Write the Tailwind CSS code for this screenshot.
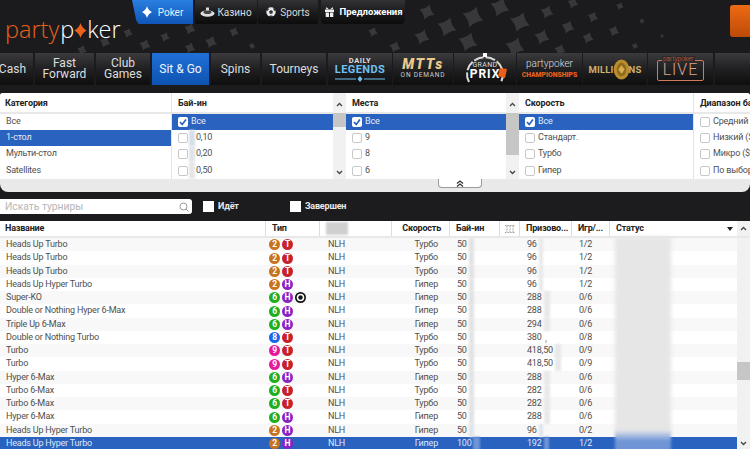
<!DOCTYPE html>
<html lang="ru">
<head>
<meta charset="utf-8">
<script src="https://cdn.jsdelivr.net/npm/@tailwindcss/browser@4"></script>
</head>
<body class="w-[750px] h-[449px] overflow-hidden bg-[#1c1c1e] font-['Roboto',sans-serif] text-[9px] tracking-[-0.2px] text-[#4f4f4f]">
<div class="relative w-[750px] h-[449px] overflow-hidden flex flex-col">

<!-- header -->
<header class="relative h-[93px] shrink-0 bg-[#1b1b1d] overflow-hidden tracking-normal">
  <svg class="absolute left-0 top-0" width="750" height="53" viewBox="0 0 750 53" fill="#38383a">
    <defs><path id="dm" d="M0-10Q3-3 10 0Q3 3 0 10Q-3 3-10 0Q-3-3 0-10z"/></defs>
    <use href="#dm" transform="translate(82 50) rotate(20) scale(.5)"/>
    <use href="#dm" transform="translate(105 42) rotate(20) scale(.55)"/>
    <use href="#dm" transform="translate(128 33) rotate(20) scale(.5)"/>
    <use href="#dm" transform="translate(145 45) rotate(20) scale(.6)"/>
    <use href="#dm" transform="translate(165 37) rotate(20) scale(.5)"/>
    <use href="#dm" transform="translate(190 29) rotate(20) scale(.6)"/>
    <use href="#dm" transform="translate(190 48) rotate(20) scale(.55)"/>
    <use href="#dm" transform="translate(211 42) rotate(20) scale(.65)"/>
    <use href="#dm" transform="translate(234 32) rotate(20) scale(.5)"/>
    <use href="#dm" transform="translate(252 46) rotate(20) scale(.35)"/>
    <use href="#dm" transform="translate(373 32) rotate(20) scale(.5)"/>
    <use href="#dm" transform="translate(395 47) rotate(20) scale(.6)"/>
    <use href="#dm" transform="translate(422 37) rotate(20) scale(.8)"/>
    <use href="#dm" transform="translate(427 12) rotate(20) scale(.8)"/>
    <use href="#dm" transform="translate(447 27) rotate(20) scale(1)"/>
    <use href="#dm" transform="translate(468 42) rotate(20) scale(1)"/>
    <use href="#dm" transform="translate(473 17) rotate(20) scale(1.100)"/>
    <use href="#dm" transform="translate(500 7) rotate(20) scale(1)"/>
    <use href="#dm" transform="translate(515 47) rotate(20) scale(1)"/>
    <use href="#dm" transform="translate(520 22) rotate(20) scale(1.050)"/>
    <use href="#dm" transform="translate(542 37) rotate(20) scale(.8)"/>
    <use href="#dm" transform="translate(547 12) rotate(20) scale(.7)"/>
    <use href="#dm" transform="translate(560 50) rotate(20) scale(.6)"/>
    <use href="#dm" transform="translate(568 27) rotate(20) scale(.7)"/>
    <use href="#dm" transform="translate(573 3) rotate(20) scale(.6)"/>
    <use href="#dm" transform="translate(588 38) rotate(20) scale(.6)"/>
    <use href="#dm" transform="translate(593 17) rotate(20) scale(.55)"/>
    <use href="#dm" transform="translate(614 31) rotate(20) scale(.55)"/>
    <use href="#dm" transform="translate(620 6) rotate(20) scale(.4)"/>
    <use href="#dm" transform="translate(635 46) rotate(20) scale(.35)"/>
    <use href="#dm" transform="translate(642 21) rotate(20) scale(.3)"/>
    <use href="#dm" transform="translate(662 36) rotate(20) scale(.2)"/>
  </svg>

  <!-- logo -->
  <div class="absolute left-[5px] top-[14px] flex items-center h-[32px] text-[23.500px] leading-none font-['Open_Sans',sans-serif] font-light">
    <span class="text-[#e8601c]">party</span><span class="text-white ml-[1px]">p</span><svg width="13" height="17" viewBox="0 0 13 17"><path d="M6.500 1Q8 6 12.500 8.500Q8 11 6.500 16Q5 11 .5 8.500Q5 6 6.500 1z" fill="#e8601c"/></svg><span class="text-white">ker</span>
  </div>

  <!-- top tabs -->
  <nav class="absolute left-[132px] top-0 flex h-[24px] text-[10px]">
    <div class="w-[61px] h-[24px] flex items-center justify-center gap-[6px] bg-gradient-to-b from-[#2a7fe0] to-[#0f56b8] text-[#e6eefb] [clip-path:polygon(0_0,100%_0,100%_100%,11%_100%,7%_85%)]">
      <svg width="10" height="12" viewBox="0 0 10 12"><path d="M5 0Q6 4 10 6Q6 8 5 12Q4 8 0 6Q4 4 5 0z" fill="#fff"/></svg><span>Poker</span>
    </div>
    <div class="ml-[2px] w-[62px] flex items-center justify-center gap-[2px] bg-gradient-to-b from-[#333335] via-[#1c1c1e] to-[#0c0c0d] text-[#dcdcdc] rounded-b-[2px]">
      <svg width="15" height="10" viewBox="0 0 15 10"><ellipse cx="7.500" cy="6.500" rx="7" ry="3.300" fill="#ddd"/><ellipse cx="7.500" cy="5" rx="4" ry="2" fill="#444"/><rect x="6" y="0.500" width="3" height="3" fill="#ddd"/></svg><span>Казино</span>
    </div>
    <div class="ml-[1px] w-[60px] flex items-center justify-center gap-[4px] bg-gradient-to-b from-[#333335] via-[#1c1c1e] to-[#0c0c0d] text-[#d8d8d8] rounded-b-[2px]">
      <svg width="10" height="10" viewBox="0 0 10 10"><circle cx="5" cy="5" r="4.700" fill="#e8e8e8"/><path d="M5 3l2 1.500-.8 2.300H3.800L3 4.500z M0 3l2-2 1 1-1.500 2z M10 3L8 1 7 2l1.500 2z M3 10l.8-1.500h2.400L7 10z" fill="#333"/></svg><span>Sports</span>
    </div>
    <div class="ml-[3px] w-[84px] flex items-center justify-center gap-[5px] pl-[2px] bg-gradient-to-b from-[#333335] via-[#1c1c1e] to-[#0c0c0d] text-white font-bold text-[9.500px] rounded-b-[4px]">
      <svg width="9" height="10" viewBox="0 0 9 10" fill="#eee"><rect y="2.500" width="9" height="2.500"/><rect x=".7" y="5.500" width="3.300" height="4.500"/><rect x="5" y="5.500" width="3.300" height="4.500"/><path d="M4 2.500L1.500 0 1 2z M5 2.500L7.500 0 8 2z"/></svg><span>Предложения</span>
    </div>
  </nav>

  <!-- orange button -->
  <div class="absolute left-[730px] top-[5px] w-[24px] h-[32px] rounded-[3px] bg-gradient-to-b from-[#ee6a14] to-[#bd4a08]"></div>

  <!-- lobby nav -->
  <nav class="absolute left-0 top-[53px] h-[32px] w-[750px] flex gap-[2px] text-[#dedede] text-[12px] leading-[11px] text-center">
    <div class="w-[33px] flex items-center justify-end pr-[7px] bg-gradient-to-b from-[#3b3b3d] via-[#202022] to-[#0e0e0f]">Cash</div>
    <div class="w-[59px] flex items-center justify-center bg-gradient-to-b from-[#3b3b3d] via-[#202022] to-[#0e0e0f]">Fast<br>Forward</div>
    <div class="w-[54px] flex items-center justify-center bg-gradient-to-b from-[#3b3b3d] via-[#202022] to-[#0e0e0f]">Club<br>Games</div>
    <div class="w-[57px] flex items-center justify-center bg-gradient-to-b from-[#1f70d8] to-[#0e53b0] text-[#eef4ff]">Sit &amp; Go</div>
    <div class="w-[49px] flex items-center justify-center bg-gradient-to-b from-[#3b3b3d] via-[#202022] to-[#0e0e0f]">Spins</div>
    <div class="w-[64px] flex items-center justify-center bg-gradient-to-b from-[#3b3b3d] via-[#202022] to-[#0e0e0f]">Tourneys</div>
    <div class="w-[64px] flex flex-col items-center justify-center bg-gradient-to-b from-[#3b3b3d] via-[#202022] to-[#0e0e0f]">
      <span class="text-[7.500px] leading-[8px] font-bold text-[#ddd] tracking-[0.5px]">DAILY</span>
      <span class="text-[11px] leading-[10px] font-bold text-[#6ec1f0] tracking-[0.4px]">LEGENDS</span>
      <svg width="50" height="6" viewBox="0 0 50 6" class="mt-[1px]"><path d="M0 3h21M29 3h21" stroke="#6ec1f0" stroke-width="1"/><path d="M25 0l2.500 3-2.500 3-2.500-3z" fill="#6ec1f0"/></svg>
    </div>
    <div class="w-[60px] -ml-[1px] flex flex-col items-center justify-center bg-gradient-to-b from-[#3b3b3d] via-[#202022] to-[#0e0e0f]">
      <span class="text-[14px] leading-[13px] font-black italic text-[#edc98c] tracking-[1.500px]">MTTs</span>
      <span class="text-[6.500px] leading-[9px] text-[#ccc] tracking-[0.8px] whitespace-nowrap">ON DEMAND</span>
    </div>
    <div class="relative w-[62px] -ml-[1px] flex flex-col items-center justify-center bg-gradient-to-b from-[#3b3b3d] via-[#202022] to-[#0e0e0f]">
      <svg class="absolute left-[8px] top-0" width="46" height="32" viewBox="0 0 46 32" fill="none"><path d="M7 29A18 17 0 1 1 39 29" stroke="#d8d8d8" stroke-width="2" stroke-dasharray="10 2"/><path d="M21 0h4v4h-4z" fill="#fff"/><path d="M38 15l7 1-2 9-7-2z" fill="#e8601c"/></svg>
      <span class="relative text-[7px] leading-[7px] mt-[4px] text-[#ddd] tracking-[0.4px]">GRAND</span>
      <span class="relative text-[12px] leading-[11px] font-bold text-white tracking-[1px]">PRIX</span>
    </div>
    <div class="w-[65px] -ml-[1px] flex flex-col items-center justify-center gap-[2px] bg-gradient-to-b from-[#3b3b3d] via-[#202022] to-[#0e0e0f]">
      <span class="text-[10px] leading-[10px] text-[#ddd] font-light">partypoker</span>
      <span class="text-[6.800px] leading-[8px] font-black text-[#e8601c] whitespace-nowrap">CHAMPIONSHIPS</span>
    </div>
    <div class="w-[64px] -ml-[1px] flex items-center justify-center bg-gradient-to-b from-[#3b3b3d] via-[#202022] to-[#0e0e0f] text-[9.500px] font-bold text-[#cdb26a] tracking-[0.2px]">
      <span>MILLI</span><svg class="-mx-[1px]" width="17" height="21" viewBox="0 0 16 20"><ellipse cx="8" cy="10" rx="7.500" ry="9.500" fill="#b98d2e"/><ellipse cx="8" cy="10" rx="4.500" ry="6.500" fill="#8f6a1d"/><path d="M8 6l3 4-3 4-3-4z" fill="#d6ae50"/></svg><span>NS</span>
    </div>
    <div class="relative w-[65px] -ml-[1px] flex items-center justify-center bg-gradient-to-b from-[#3b3b3d] via-[#202022] to-[#0e0e0f]">
      <div class="relative w-[47px] h-[21px] mt-[2px] border border-[#d07a5c] rounded-[2px] flex items-center justify-center text-[16px] leading-none font-light text-[#dca38f] tracking-[1px]">
        <span class="absolute -top-[5px] left-[4px] px-[1px] bg-[#2a2a2c] text-[6.500px] leading-[7px] tracking-normal text-[#d9623a] whitespace-nowrap">partypoker</span>LIVE
      </div>
    </div>
    <div class="flex-1 bg-gradient-to-b from-[#3b3b3d] via-[#202022] to-[#0e0e0f]"></div>
  </nav>
</header>

<!-- filters -->
<section class="relative h-[99px] shrink-0 bg-[#e9e9e9] rounded-b-[8px] rounded-t-[3px] overflow-hidden">
  <div class="h-[86px] flex bg-white">
    <!-- category -->
    <div class="w-[172px] border-r border-[#e4e4e4]">
      <div class="h-[20.500px] pt-[3px] flex items-center pl-[5px] font-bold tracking-[-0.1px] text-[#222] border-b-2 border-[#e8e8e8]">Категория</div>
      <div class="h-[16.300px] flex items-center pl-[6px]">Все</div>
      <div class="h-[16.300px] flex items-center pl-[6px] bg-[#2a62bf] text-[#e4ecfa]">1-стол</div>
      <div class="h-[16.300px] flex items-center pl-[6px]">Мульти-стол</div>
      <div class="h-[16.300px] flex items-center pl-[6px]">Satellites</div>
    </div>
    <!-- buy-in -->
    <div class="w-[161px]">
      <div class="h-[20.500px] pt-[3px] flex items-center pl-[6px] font-bold tracking-[-0.1px] text-[#222] border-b-2 border-[#e8e8e8]">Бай-ин</div>
      <div class="h-[16.300px] flex items-center pl-[6px] gap-[3px] bg-[#2a62bf] text-[#e4ecfa]"><svg width="10" height="10" viewBox="0 0 10 10"><rect width="10" height="10" rx="2" fill="#fff"/><path d="M2 5l2.200 2.500L8 2.500" fill="none" stroke="#2a62bf" stroke-width="1.700"/></svg>Все</div>
      <div class="h-[16.300px] flex items-center pl-[6px] gap-[1px]"><span class="w-[10px] h-[10px] rounded-[2px] border border-[#c8c8c8]"></span><span class="w-[6px] h-[16.300px] bg-[#d5dfea] blur-[1px]"></span>0,10</div>
      <div class="h-[16.300px] flex items-center pl-[6px] gap-[1px]"><span class="w-[10px] h-[10px] rounded-[2px] border border-[#c8c8c8]"></span><span class="w-[6px] h-[16.300px] bg-[#dfe4e9] blur-[1px]"></span>0,20</div>
      <div class="h-[16.300px] flex items-center pl-[6px] gap-[1px]"><span class="w-[10px] h-[10px] rounded-[2px] border border-[#c8c8c8]"></span><span class="w-[6px] h-[16.300px] bg-[#e6e6e6] blur-[1px]"></span>0,50</div>
    </div>
    <!-- scroll -->
    <div class="w-[13px] bg-[#f1f1f1] flex flex-col items-center text-[#333]">
      <svg class="mt-[9px]" width="7" height="5" viewBox="0 0 7 5"><path d="M1 4l2.500-2.500L6 4" fill="none" stroke="#444" stroke-width="1.300"/></svg>
      <div class="w-full h-[14px] mt-[6px] bg-[#c6c6c6]"></div>
      <svg class="mt-auto mb-[4px]" width="7" height="5" viewBox="0 0 7 5"><path d="M1 1l2.500 2.500L6 1" fill="none" stroke="#444" stroke-width="1.300"/></svg>
    </div>
    <!-- seats -->
    <div class="w-[160px]">
      <div class="h-[20.500px] pt-[3px] flex items-center pl-[6px] font-bold tracking-[-0.1px] text-[#222] border-b-2 border-[#e8e8e8]">Места</div>
      <div class="h-[16.300px] flex items-center pl-[6px] gap-[3px] bg-[#2a62bf] text-[#e4ecfa]"><svg width="10" height="10" viewBox="0 0 10 10"><rect width="10" height="10" rx="2" fill="#fff"/><path d="M2 5l2.200 2.500L8 2.500" fill="none" stroke="#2a62bf" stroke-width="1.700"/></svg>Все</div>
      <div class="h-[16.300px] flex items-center pl-[6px] gap-[3px]"><span class="w-[10px] h-[10px] rounded-[2px] border border-[#c8c8c8]"></span>9</div>
      <div class="h-[16.300px] flex items-center pl-[6px] gap-[3px]"><span class="w-[10px] h-[10px] rounded-[2px] border border-[#c8c8c8]"></span>8</div>
      <div class="h-[16.300px] flex items-center pl-[6px] gap-[3px]"><span class="w-[10px] h-[10px] rounded-[2px] border border-[#c8c8c8]"></span>6</div>
    </div>
    <!-- scroll -->
    <div class="w-[13px] bg-[#f1f1f1] flex flex-col items-center">
      <svg class="mt-[9px]" width="7" height="5" viewBox="0 0 7 5"><path d="M1 4l2.500-2.500L6 4" fill="none" stroke="#444" stroke-width="1.300"/></svg>
      <div class="w-full h-[42px] mt-[6px] bg-[#c6c6c6]"></div>
      <svg class="mt-auto mb-[4px]" width="7" height="5" viewBox="0 0 7 5"><path d="M1 1l2.500 2.500L6 1" fill="none" stroke="#444" stroke-width="1.300"/></svg>
    </div>
    <!-- speed -->
    <div class="w-[175px] border-r border-[#e4e4e4]">
      <div class="h-[20.500px] pt-[3px] flex items-center pl-[6px] font-bold tracking-[-0.1px] text-[#222] border-b-2 border-[#e8e8e8]">Скорость</div>
      <div class="h-[16.300px] flex items-center pl-[6px] gap-[3px] bg-[#2a62bf] text-[#e4ecfa]"><svg width="10" height="10" viewBox="0 0 10 10"><rect width="10" height="10" rx="2" fill="#fff"/><path d="M2 5l2.200 2.500L8 2.500" fill="none" stroke="#2a62bf" stroke-width="1.700"/></svg>Все</div>
      <div class="h-[16.300px] flex items-center pl-[6px] gap-[3px]"><span class="w-[10px] h-[10px] rounded-[2px] border border-[#c8c8c8]"></span>Стандарт.</div>
      <div class="h-[16.300px] flex items-center pl-[6px] gap-[3px]"><span class="w-[10px] h-[10px] rounded-[2px] border border-[#c8c8c8]"></span>Турбо</div>
      <div class="h-[16.300px] flex items-center pl-[6px] gap-[3px]"><span class="w-[10px] h-[10px] rounded-[2px] border border-[#c8c8c8]"></span>Гипер</div>
    </div>
    <!-- range -->
    <div class="flex-1 whitespace-nowrap overflow-hidden">
      <div class="h-[20.500px] pt-[3px] flex items-center pl-[6px] font-bold tracking-[-0.1px] text-[#222] border-b-2 border-[#e8e8e8]">Диапазон бай-ин</div>
      <div class="h-[16.300px] flex items-center pl-[6px] gap-[3px]"><span class="shrink-0 w-[10px] h-[10px] rounded-[2px] border border-[#c8c8c8]"></span>Средний ($)</div>
      <div class="h-[16.300px] flex items-center pl-[6px] gap-[3px]"><span class="shrink-0 w-[10px] h-[10px] rounded-[2px] border border-[#c8c8c8]"></span>Низкий ($)</div>
      <div class="h-[16.300px] flex items-center pl-[6px] gap-[3px]"><span class="shrink-0 w-[10px] h-[10px] rounded-[2px] border border-[#c8c8c8]"></span>Микро ($)</div>
      <div class="h-[16.300px] flex items-center pl-[6px] gap-[3px]"><span class="shrink-0 w-[10px] h-[10px] rounded-[2px] border border-[#c8c8c8]"></span>По выбору</div>
    </div>
  </div>
  <div class="absolute left-[438px] top-[86px] w-[44px] h-[9px] flex items-center justify-center bg-white border-b border-x border-[#999] rounded-b-[4px]">
    <svg width="8" height="7" viewBox="0 0 8 7"><path d="M1 3.500L4 1l3 2.500M1 6.500L4 4l3 2.500" fill="none" stroke="#333" stroke-width="1.300"/></svg>
  </div>
</section>

<!-- search bar -->
<div class="h-[29px] shrink-0 flex items-center bg-[#1c1c1e] text-[#e8e8e8] font-bold">
  <div class="w-[192px] h-[15px] flex items-center justify-between pl-[5px] pr-[3px] bg-white rounded-r-[3px] font-normal text-[10.300px] tracking-normal text-[#b5b5b5]">
    <span>Искать турниры</span>
    <svg width="10" height="10" viewBox="0 0 10 10" fill="none" stroke="#999"><circle cx="4.500" cy="4.500" r="3.500"/><path d="M7 7l2.500 2.500"/></svg>
  </div>
  <span class="ml-[11px] w-[11px] h-[11px] bg-white"></span><span class="ml-[4px] w-[72px]">Идёт</span>
  <span class="w-[11px] h-[11px] bg-white"></span><span class="ml-[4px]">Завершен</span>
</div>

<!-- table -->
<div class="relative flex-1 bg-white overflow-hidden">
  <div class="grid grid-cols-[266px_54px_72px_58px_50px_20px_52px_38px_127px_13px] h-[17px] items-center bg-white text-[#222] font-bold border-b-2 border-[#e8e8e8]">
    <div class="pl-[5px] border-r border-[#ddd] h-full flex items-center">Название</div>
    <div class="pl-[6px] border-r border-[#ddd] h-full flex items-center">Тип</div>
    <div class="border-r border-[#ddd] h-full flex items-center pl-[6px]"><span class="w-[22px] h-[13px] bg-[#cfcfcf] blur-[1px]"></span></div>
    <div class="pr-[8px] border-r border-[#ddd] h-full flex items-center justify-end">Скорость</div>
    <div class="pl-[6px] border-r border-[#ddd] h-full flex items-center">Бай-ин</div>
    <div class="border-r border-[#ddd] h-full flex items-center justify-center"><svg width="10" height="8" viewBox="0 0 10 8" fill="none" stroke="#999"><path d="M0 .5h10M0 7.500h10M2 1v6M5 1v6M8 1v6" stroke-dasharray="1 .6"/></svg></div>
    <div class="pl-[6px] border-r border-[#ddd] h-full flex items-center whitespace-nowrap">Призово...</div>
    <div class="pl-[6px] border-r border-[#ddd] h-full flex items-center whitespace-nowrap">Игр/...</div>
    <div class="pl-[6px] pr-[4px] h-full flex items-center justify-between">Статус<svg width="6" height="4" viewBox="0 0 6 4"><path d="M0 0h6L3 4z" fill="#222"/></svg></div>
    <div class="h-full flex items-center justify-center bg-[#f1f1f1]"><svg width="7" height="5" viewBox="0 0 7 5"><path d="M1 4l2.500-2.500L6 4" fill="none" stroke="#444" stroke-width="1.300"/></svg></div>
  </div>

  <div class="grid grid-cols-[266px_54px_72px_58px_50px_20px_52px_38px_127px_13px] h-[13.270px] items-center bg-[#f8f8f8]"><div class="pl-[6px]">Heads Up Turbo</div><div class="flex gap-[2px] pl-[3px]"><b class="w-[11px] h-[11px] rounded-full bg-[#c8731e] text-white text-[8.500px] leading-[11px] text-center">2</b><b class="w-[11px] h-[11px] rounded-full bg-[#c8202c] text-white text-[8.500px] leading-[11px] text-center">T</b></div><div class="pl-[8px]">NLH</div><div class="pr-[12px] text-right">Турбо</div><div class="pl-[7px] flex items-center h-full">50<span class="ml-[2px] w-[5px] h-full bg-[#e2e2e2] blur-[1px]"></span></div><div></div><div class="pl-[7px] flex items-center h-full">96<span class="ml-[2px] w-[4px] h-full bg-[#e8e8e8] blur-[1px]"></span></div><div class="pl-[7px]">1/2</div><div></div><div class="h-full bg-[#f1f1f1]"></div></div>
  <div class="grid grid-cols-[266px_54px_72px_58px_50px_20px_52px_38px_127px_13px] h-[13.270px] items-center bg-white"><div class="pl-[6px]">Heads Up Turbo</div><div class="flex gap-[2px] pl-[3px]"><b class="w-[11px] h-[11px] rounded-full bg-[#c8731e] text-white text-[8.500px] leading-[11px] text-center">2</b><b class="w-[11px] h-[11px] rounded-full bg-[#c8202c] text-white text-[8.500px] leading-[11px] text-center">T</b></div><div class="pl-[8px]">NLH</div><div class="pr-[12px] text-right">Турбо</div><div class="pl-[7px] flex items-center h-full">50<span class="ml-[2px] w-[5px] h-full bg-[#e2e2e2] blur-[1px]"></span></div><div></div><div class="pl-[7px] flex items-center h-full">96<span class="ml-[2px] w-[4px] h-full bg-[#e8e8e8] blur-[1px]"></span></div><div class="pl-[7px]">1/2</div><div></div><div class="h-full bg-[#f1f1f1]"></div></div>
  <div class="grid grid-cols-[266px_54px_72px_58px_50px_20px_52px_38px_127px_13px] h-[13.270px] items-center bg-[#f8f8f8]"><div class="pl-[6px]">Heads Up Turbo</div><div class="flex gap-[2px] pl-[3px]"><b class="w-[11px] h-[11px] rounded-full bg-[#c8731e] text-white text-[8.500px] leading-[11px] text-center">2</b><b class="w-[11px] h-[11px] rounded-full bg-[#c8202c] text-white text-[8.500px] leading-[11px] text-center">T</b></div><div class="pl-[8px]">NLH</div><div class="pr-[12px] text-right">Турбо</div><div class="pl-[7px] flex items-center h-full">50<span class="ml-[2px] w-[5px] h-full bg-[#e2e2e2] blur-[1px]"></span></div><div></div><div class="pl-[7px] flex items-center h-full">96<span class="ml-[2px] w-[4px] h-full bg-[#e8e8e8] blur-[1px]"></span></div><div class="pl-[7px]">1/2</div><div></div><div class="h-full bg-[#f1f1f1]"></div></div>
  <div class="grid grid-cols-[266px_54px_72px_58px_50px_20px_52px_38px_127px_13px] h-[13.270px] items-center bg-white"><div class="pl-[6px]">Heads Up Hyper Turbo</div><div class="flex gap-[2px] pl-[3px]"><b class="w-[11px] h-[11px] rounded-full bg-[#c8731e] text-white text-[8.500px] leading-[11px] text-center">2</b><b class="w-[11px] h-[11px] rounded-full bg-[#8a22c4] text-white text-[8.500px] leading-[11px] text-center">H</b></div><div class="pl-[8px]">NLH</div><div class="pr-[12px] text-right">Гипер</div><div class="pl-[7px] flex items-center h-full">50<span class="ml-[2px] w-[5px] h-full bg-[#e2e2e2] blur-[1px]"></span></div><div></div><div class="pl-[7px] flex items-center h-full">96<span class="ml-[2px] w-[4px] h-full bg-[#e8e8e8] blur-[1px]"></span></div><div class="pl-[7px]">1/2</div><div></div><div class="h-full bg-[#f1f1f1]"></div></div>
  <div class="grid grid-cols-[266px_54px_72px_58px_50px_20px_52px_38px_127px_13px] h-[13.270px] items-center bg-[#f8f8f8]"><div class="pl-[6px]">Super-KO</div><div class="flex gap-[2px] pl-[3px]"><b class="w-[11px] h-[11px] rounded-full bg-[#1fae1f] text-white text-[8.500px] leading-[11px] text-center">6</b><b class="w-[11px] h-[11px] rounded-full bg-[#8a22c4] text-white text-[8.500px] leading-[11px] text-center">H</b><svg width="11" height="11" viewBox="0 0 11 11"><circle cx="5.500" cy="5.500" r="5.500" fill="#111"/><circle cx="5.500" cy="5.500" r="3.800" fill="#fff"/><circle cx="5.500" cy="5.500" r="2.200" fill="#111"/></svg></div><div class="pl-[8px]">NLH</div><div class="pr-[12px] text-right">Гипер</div><div class="pl-[7px] flex items-center h-full">50<span class="ml-[2px] w-[5px] h-full bg-[#e2e2e2] blur-[1px]"></span></div><div></div><div class="pl-[7px] flex items-center h-full">288<span class="ml-[2px] w-[6px] h-full bg-[#e8e8e8] blur-[1px]"></span></div><div class="pl-[7px]">0/6</div><div></div><div class="h-full bg-[#f1f1f1]"></div></div>
  <div class="grid grid-cols-[266px_54px_72px_58px_50px_20px_52px_38px_127px_13px] h-[13.270px] items-center bg-white"><div class="pl-[6px]">Double or Nothing Hyper 6-Max</div><div class="flex gap-[2px] pl-[3px]"><b class="w-[11px] h-[11px] rounded-full bg-[#1fae1f] text-white text-[8.500px] leading-[11px] text-center">6</b><b class="w-[11px] h-[11px] rounded-full bg-[#8a22c4] text-white text-[8.500px] leading-[11px] text-center">H</b></div><div class="pl-[8px]">NLH</div><div class="pr-[12px] text-right">Гипер</div><div class="pl-[7px] flex items-center h-full">50<span class="ml-[2px] w-[5px] h-full bg-[#e2e2e2] blur-[1px]"></span></div><div></div><div class="pl-[7px] flex items-center h-full">288<span class="ml-[2px] w-[6px] h-full bg-[#e8e8e8] blur-[1px]"></span></div><div class="pl-[7px]">0/6</div><div></div><div class="h-full bg-[#f1f1f1]"></div></div>
  <div class="grid grid-cols-[266px_54px_72px_58px_50px_20px_52px_38px_127px_13px] h-[13.270px] items-center bg-[#f8f8f8]"><div class="pl-[6px]">Triple Up 6-Max</div><div class="flex gap-[2px] pl-[3px]"><b class="w-[11px] h-[11px] rounded-full bg-[#1fae1f] text-white text-[8.500px] leading-[11px] text-center">6</b><b class="w-[11px] h-[11px] rounded-full bg-[#8a22c4] text-white text-[8.500px] leading-[11px] text-center">H</b></div><div class="pl-[8px]">NLH</div><div class="pr-[12px] text-right">Гипер</div><div class="pl-[7px] flex items-center h-full">50<span class="ml-[2px] w-[5px] h-full bg-[#e2e2e2] blur-[1px]"></span></div><div></div><div class="pl-[7px] flex items-center h-full">294<span class="ml-[2px] w-[6px] h-full bg-[#e8e8e8] blur-[1px]"></span></div><div class="pl-[7px]">0/6</div><div></div><div class="h-full bg-[#f1f1f1]"></div></div>
  <div class="grid grid-cols-[266px_54px_72px_58px_50px_20px_52px_38px_127px_13px] h-[13.270px] items-center bg-white"><div class="pl-[6px]">Double or Nothing Turbo</div><div class="flex gap-[2px] pl-[3px]"><b class="w-[11px] h-[11px] rounded-full bg-[#1a66e8] text-white text-[8.500px] leading-[11px] text-center">8</b><b class="w-[11px] h-[11px] rounded-full bg-[#c8202c] text-white text-[8.500px] leading-[11px] text-center">T</b></div><div class="pl-[8px]">NLH</div><div class="pr-[12px] text-right">Турбо</div><div class="pl-[7px] flex items-center h-full">50<span class="ml-[2px] w-[5px] h-full bg-[#e2e2e2] blur-[1px]"></span></div><div></div><div class="pl-[7px] flex items-center h-full">380<span class="ml-[3px] w-[2px] h-[3px] mt-[8px] bg-[#ccc] blur-[0.5px]"></span></div><div class="pl-[7px]">0/8</div><div></div><div class="h-full bg-[#f1f1f1]"></div></div>
  <div class="grid grid-cols-[266px_54px_72px_58px_50px_20px_52px_38px_127px_13px] h-[13.270px] items-center bg-[#f8f8f8]"><div class="pl-[6px]">Turbo</div><div class="flex gap-[2px] pl-[3px]"><b class="w-[11px] h-[11px] rounded-full bg-[#e8189c] text-white text-[8.500px] leading-[11px] text-center">9</b><b class="w-[11px] h-[11px] rounded-full bg-[#c8202c] text-white text-[8.500px] leading-[11px] text-center">T</b></div><div class="pl-[8px]">NLH</div><div class="pr-[12px] text-right">Турбо</div><div class="pl-[7px] flex items-center h-full">50<span class="ml-[2px] w-[5px] h-full bg-[#e2e2e2] blur-[1px]"></span></div><div></div><div class="pl-[7px] flex items-center h-full">418,50<span class="ml-[2px] w-[6px] h-full bg-[#e8e8e8] blur-[1px]"></span></div><div class="pl-[7px]">0/9</div><div></div><div class="h-full bg-[#f1f1f1]"></div></div>
  <div class="grid grid-cols-[266px_54px_72px_58px_50px_20px_52px_38px_127px_13px] h-[13.270px] items-center bg-white"><div class="pl-[6px]">Turbo</div><div class="flex gap-[2px] pl-[3px]"><b class="w-[11px] h-[11px] rounded-full bg-[#e8189c] text-white text-[8.500px] leading-[11px] text-center">9</b><b class="w-[11px] h-[11px] rounded-full bg-[#c8202c] text-white text-[8.500px] leading-[11px] text-center">T</b></div><div class="pl-[8px]">NLH</div><div class="pr-[12px] text-right">Турбо</div><div class="pl-[7px] flex items-center h-full">50<span class="ml-[2px] w-[5px] h-full bg-[#e2e2e2] blur-[1px]"></span></div><div></div><div class="pl-[7px] flex items-center h-full">418,50<span class="ml-[2px] w-[6px] h-full bg-[#e8e8e8] blur-[1px]"></span></div><div class="pl-[7px]">0/9</div><div></div><div class="h-full bg-[#f1f1f1]"></div></div>
  <div class="grid grid-cols-[266px_54px_72px_58px_50px_20px_52px_38px_127px_13px] h-[13.270px] items-center bg-[#f8f8f8]"><div class="pl-[6px]">Hyper 6-Max</div><div class="flex gap-[2px] pl-[3px]"><b class="w-[11px] h-[11px] rounded-full bg-[#1fae1f] text-white text-[8.500px] leading-[11px] text-center">6</b><b class="w-[11px] h-[11px] rounded-full bg-[#8a22c4] text-white text-[8.500px] leading-[11px] text-center">H</b></div><div class="pl-[8px]">NLH</div><div class="pr-[12px] text-right">Гипер</div><div class="pl-[7px] flex items-center h-full">50<span class="ml-[2px] w-[5px] h-full bg-[#e2e2e2] blur-[1px]"></span></div><div></div><div class="pl-[7px] flex items-center h-full">288<span class="ml-[2px] w-[6px] h-full bg-[#e8e8e8] blur-[1px]"></span></div><div class="pl-[7px]">0/6</div><div></div><div class="h-full bg-[#f1f1f1]"></div></div>
  <div class="grid grid-cols-[266px_54px_72px_58px_50px_20px_52px_38px_127px_13px] h-[13.270px] items-center bg-white"><div class="pl-[6px]">Turbo 6-Max</div><div class="flex gap-[2px] pl-[3px]"><b class="w-[11px] h-[11px] rounded-full bg-[#1fae1f] text-white text-[8.500px] leading-[11px] text-center">6</b><b class="w-[11px] h-[11px] rounded-full bg-[#c8202c] text-white text-[8.500px] leading-[11px] text-center">T</b></div><div class="pl-[8px]">NLH</div><div class="pr-[12px] text-right">Турбо</div><div class="pl-[7px] flex items-center h-full">50<span class="ml-[2px] w-[5px] h-full bg-[#e2e2e2] blur-[1px]"></span></div><div></div><div class="pl-[7px] flex items-center h-full">282<span class="ml-[2px] w-[6px] h-full bg-[#e8e8e8] blur-[1px]"></span></div><div class="pl-[7px]">0/6</div><div></div><div class="h-full bg-[#f1f1f1]"></div></div>
  <div class="grid grid-cols-[266px_54px_72px_58px_50px_20px_52px_38px_127px_13px] h-[13.270px] items-center bg-[#f8f8f8]"><div class="pl-[6px]">Turbo 6-Max</div><div class="flex gap-[2px] pl-[3px]"><b class="w-[11px] h-[11px] rounded-full bg-[#1fae1f] text-white text-[8.500px] leading-[11px] text-center">6</b><b class="w-[11px] h-[11px] rounded-full bg-[#c8202c] text-white text-[8.500px] leading-[11px] text-center">T</b></div><div class="pl-[8px]">NLH</div><div class="pr-[12px] text-right">Турбо</div><div class="pl-[7px] flex items-center h-full">50<span class="ml-[2px] w-[5px] h-full bg-[#e2e2e2] blur-[1px]"></span></div><div></div><div class="pl-[7px] flex items-center h-full">282<span class="ml-[2px] w-[6px] h-full bg-[#e8e8e8] blur-[1px]"></span></div><div class="pl-[7px]">0/6</div><div></div><div class="h-full bg-[#f1f1f1]"></div></div>
  <div class="grid grid-cols-[266px_54px_72px_58px_50px_20px_52px_38px_127px_13px] h-[13.270px] items-center bg-white"><div class="pl-[6px]">Hyper 6-Max</div><div class="flex gap-[2px] pl-[3px]"><b class="w-[11px] h-[11px] rounded-full bg-[#1fae1f] text-white text-[8.500px] leading-[11px] text-center">6</b><b class="w-[11px] h-[11px] rounded-full bg-[#8a22c4] text-white text-[8.500px] leading-[11px] text-center">H</b></div><div class="pl-[8px]">NLH</div><div class="pr-[12px] text-right">Гипер</div><div class="pl-[7px] flex items-center h-full">50<span class="ml-[2px] w-[5px] h-full bg-[#e2e2e2] blur-[1px]"></span></div><div></div><div class="pl-[7px] flex items-center h-full">288<span class="ml-[2px] w-[6px] h-full bg-[#e8e8e8] blur-[1px]"></span></div><div class="pl-[7px]">0/6</div><div></div><div class="h-full bg-[#f1f1f1]"></div></div>
  <div class="grid grid-cols-[266px_54px_72px_58px_50px_20px_52px_38px_127px_13px] h-[13.270px] items-center bg-[#f8f8f8]"><div class="pl-[6px]">Heads Up Hyper Turbo</div><div class="flex gap-[2px] pl-[3px]"><b class="w-[11px] h-[11px] rounded-full bg-[#c8731e] text-white text-[8.500px] leading-[11px] text-center">2</b><b class="w-[11px] h-[11px] rounded-full bg-[#8a22c4] text-white text-[8.500px] leading-[11px] text-center">H</b></div><div class="pl-[8px]">NLH</div><div class="pr-[12px] text-right">Гипер</div><div class="pl-[7px] flex items-center h-full">50<span class="ml-[2px] w-[5px] h-full bg-[#dfe4ea] blur-[1px]"></span></div><div></div><div class="pl-[7px] flex items-center h-full">96<span class="ml-[2px] w-[4px] h-full bg-[#dfe4ea] blur-[1px]"></span></div><div class="pl-[7px]">0/2</div><div></div><div class="h-full bg-[#f1f1f1]"></div></div>
  <div class="grid grid-cols-[266px_54px_72px_58px_50px_20px_52px_38px_127px_13px] h-[13.270px] items-center bg-[#2a62bf] text-[#dfe7f7]"><div class="pl-[6px]">Heads Up Hyper Turbo</div><div class="flex gap-[2px] pl-[3px]"><b class="w-[11px] h-[11px] rounded-full bg-[#c8731e] text-white text-[8.500px] leading-[11px] text-center">2</b><b class="w-[11px] h-[11px] rounded-full bg-[#8a22c4] text-white text-[8.500px] leading-[11px] text-center">H</b></div><div class="pl-[8px]">NLH</div><div class="pr-[12px] text-right">Гипер</div><div class="pl-[7px] flex items-center h-full">100<span class="ml-[1px] w-[7px] h-full bg-[#6f95d6] blur-[1px]"></span></div><div></div><div class="pl-[7px] flex items-center h-full">192<span class="ml-[2px] w-[5px] h-full bg-[#6f95d6] blur-[1px]"></span></div><div class="pl-[7px]">1/2</div><div></div><div class="h-full bg-[#f1f1f1] flex items-center justify-center"><svg width="7" height="5" viewBox="0 0 7 5"><path d="M1 1l2.500 2.500L6 1" fill="none" stroke="#444" stroke-width="1.300"/></svg></div></div>

  <!-- blurred status overlay -->
  <div class="absolute left-[615px] top-[16px] w-[56px] h-[197px] bg-[#e6e6e6] blur-[2px]"></div>
  <div class="absolute left-[615px] top-[209px] w-[56px] h-[22px] bg-gradient-to-b from-[#e6e6e6] via-[#6f95d6] to-[#6f95d6] blur-[1.500px]"></div>
  <!-- scrollbar thumb -->
  <div class="absolute left-[737px] top-[141px] w-[13px] h-[18px] bg-[#c6c6c6]"></div>
</div>
</div>
</body>
</html>
